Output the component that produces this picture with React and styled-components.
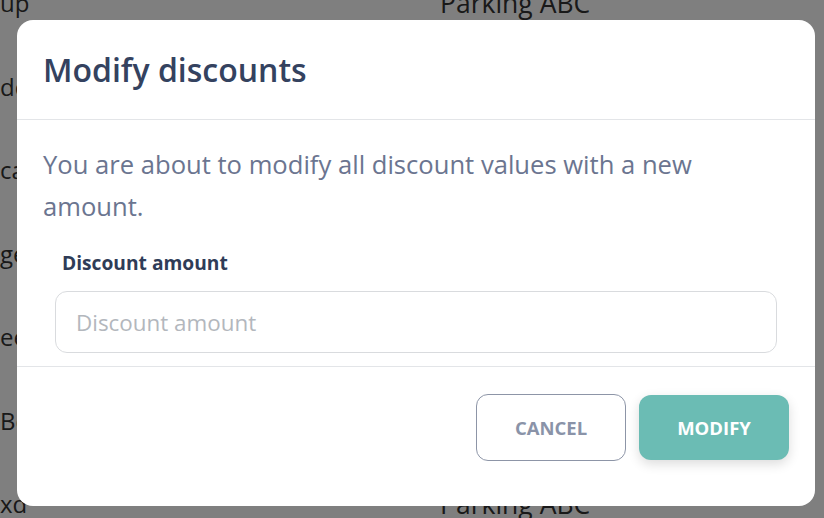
import React from "react";
import styled, { createGlobalStyle } from "styled-components";

const Global = createGlobalStyle`
  html, body { margin: 0; padding: 0; }
  body { font-family: "Open Sans", "Noto Sans", sans-serif; background: #fff; overflow: hidden; }
  * { box-sizing: border-box; }
`;

const Page = styled.div`
  width: 824px;
  height: 518px;
  position: relative;
  overflow: hidden;
`;

const Table = styled.div`
  display: flex;
  flex-direction: column;
  margin-top: -39px;
`;

const Row = styled.div`
  display: flex;
  align-items: center;
  height: 83.5px;
  color: #333;
`;

const CellName = styled.div`
  width: 440px;
  font-size: 24px;
  white-space: nowrap;
`;

const CellPlace = styled.div`
  font-size: 26.5px;
  white-space: nowrap;
`;

const Overlay = styled.div`
  position: absolute;
  inset: 0;
  background: rgba(0, 0, 0, 0.5);
  display: flex;
  align-items: flex-start;
  justify-content: flex-start;
  padding: 20px 0 0 17px;
`;

const Modal = styled.div`
  width: 798px;
  height: 486px;
  background: #fff;
  border-radius: 16px;
  display: flex;
  flex-direction: column;
  overflow: hidden;
`;

const Header = styled.div`
  height: 100px;
  padding: 0 26px;
  display: flex;
  align-items: center;
  border-bottom: 1px solid #e3e5e8;
`;

const Title = styled.h2`
  margin: 0;
  font-size: 32px;
  font-weight: 600;
  color: #34425f;
`;

const Body = styled.div`
  padding: 24px 26px 13px;
  border-bottom: 1px solid #e3e5e8;
`;

const Text = styled.p`
  margin: 0;
  font-size: 25.6px;
  line-height: 42px;
  color: #6b7590;
  padding-right: 20px;
`;

const Group = styled.div`
  padding: 0 12px;
  margin-top: 22px;
`;

const Label = styled.label`
  display: block;
  padding-left: 7px;
  font-size: 19.2px;
  font-weight: 700;
  color: #2f3c57;
  line-height: 26px;
  margin-bottom: 15px;
`;

const Input = styled.input`
  display: block;
  width: 100%;
  height: 62px;
  border: 1px solid #d9dbde;
  border-radius: 12px;
  padding: 0 20px;
  font-family: inherit;
  font-size: 22.4px;
  color: #333;
  outline: none;
  &::placeholder { color: #b3b7bd; }
`;

const Footer = styled.div`
  flex: 1;
  display: flex;
  justify-content: flex-end;
  align-items: flex-start;
  gap: 13px;
  padding: 27px 26px 0;
`;

const Button = styled.button`
  width: 150px;
  border-radius: 12px;
  font-family: inherit;
  font-size: 18.5px;
  font-weight: 700;
  cursor: pointer;
  border: 1px solid ${p => (p.$primary ? "transparent" : "#8d95a7")};
  background: ${p => (p.$primary ? "#6bbcb4" : "#fff")};
  color: ${p => (p.$primary ? "#fff" : "#8a93a8")};
  box-shadow: ${p => (p.$primary ? "0 4px 12px rgba(0,0,0,0.14)" : "none")};
  margin-top: ${p => (p.$primary ? "1px" : "0")};
  height: ${p => (p.$primary ? "65px" : "67px")};
`;

const rows = [
  ["up", "Parking ABC"],
  ["dd", ""],
  ["ca", ""],
  ["ge", ""],
  ["ee", ""],
  ["Be", ""],
  ["xd", "Parking ABC"],
];

export default function App() {
  return (
    <Page>
      <Global />
      <Table>
        {rows.map(([a, b], i) => (
          <Row key={i}>
            <CellName>{a}</CellName>
            <CellPlace>{b}</CellPlace>
          </Row>
        ))}
      </Table>
      <Overlay>
        <Modal role="dialog">
          <Header>
            <Title>Modify discounts</Title>
          </Header>
          <Body>
            <Text>You are about to modify all discount values with a new amount.</Text>
            <Group>
              <Label>Discount amount</Label>
              <Input placeholder="Discount amount" />
            </Group>
          </Body>
          <Footer>
            <Button>CANCEL</Button>
            <Button $primary>MODIFY</Button>
          </Footer>
        </Modal>
      </Overlay>
    </Page>
  );
}
